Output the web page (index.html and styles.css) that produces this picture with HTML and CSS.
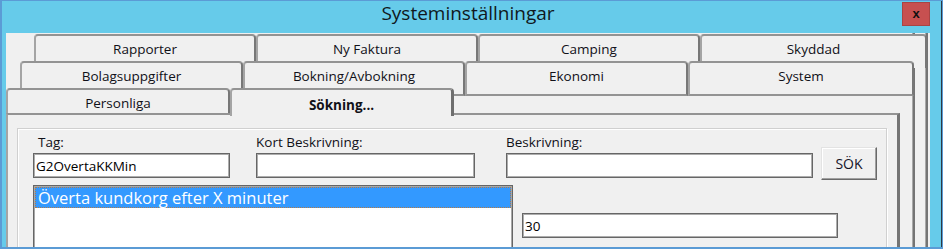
FILE: index.html
```html
<!DOCTYPE html>
<html lang="sv">
<head>
  <meta charset="UTF-8" />
  <title>Systeminställningar</title>
  <link rel="stylesheet" href="styles.css">
</head>
<body>
  <div class="window">
    <div class="titlebar">
      <div class="title">Systeminställningar</div>
      <button class="close-btn">x</button>
    </div>

    <div class="client">
      <div class="tabctl">
        <!-- back row -->
        <div class="tab-row row-1">
          <div class="tab">Rapporter</div>
          <div class="tab">Ny Faktura</div>
          <div class="tab">Camping</div>
          <div class="tab tab-last">Skyddad</div>
        </div>
        <div class="tab-row row-2">
          <div class="tab tab-wide">Bolagsuppgifter</div>
          <div class="tab">Bokning/Avbokning</div>
          <div class="tab tab-wide">Ekonomi</div>
          <div class="tab tab-end">System</div>
        </div>
        <!-- front row -->
        <div class="tab-row row-3">
          <div class="tab tab-front">Personliga</div>
          <div class="tab tab-front active">Sökning...</div>
        </div>

        <div class="tab-page">
          <div class="group">
            <div class="search-row">
              <div class="field field-tag">
                <label for="f-tag">Tag:</label>
                <input type="text" id="f-tag" value="G2OvertaKKMin">
              </div>
              <div class="field field-short">
                <label for="f-short">Kort Beskrivning:</label>
                <input type="text" id="f-short">
              </div>
              <div class="field field-desc">
                <label for="f-desc">Beskrivning:</label>
                <input type="text" id="f-desc">
              </div>
              <button class="search-btn">SÖK</button>
            </div>

            <div class="result-row">
              <div class="listbox">
                <div class="list-item selected">Överta kundkorg efter X minuter</div>
              </div>
              <input type="text" class="value-input" value="30">
            </div>
          </div>
        </div>
      </div>
    </div>
  </div>
</body>
</html>
```

FILE: styles.css
```css
* {
  margin: 0;
  padding: 0;
  box-sizing: border-box;
}

body {
  font-family: 'Open Sans', 'Noto Sans', sans-serif;
  font-size: 13.5px;
  color: #111118;
  background: #66cbea;
  overflow: hidden;
}

.window {
  width: 943px;
  height: 249px;
  display: flex;
  flex-direction: column;
  background: #66cbea;
  border-top: 1px solid #5b9bd5;
  border-left: 2px solid #5b9bd5;
  border-right: 1px solid #5b9bd5;
  border-bottom: 2px solid #5b9bd5;
  box-shadow: inset -1px 0 0 #2f3a44;
  padding: 0 12px 0 4px;
}

.titlebar {
  height: 32px;
  display: flex;
  flex: none;
}

.title {
  flex: 1;
  text-align: center;
  font-size: 19px;
  line-height: 24px;
  color: #101820;
  padding-left: 28px;
}

.close-btn {
  width: 28px;
  height: 24px;
  margin-top: 1px;
  background: #c75050;
  border: 1px solid #a94444;
  font-family: 'Liberation Sans', sans-serif;
  font-weight: bold;
  font-size: 13px;
  line-height: 18px;
  color: #111;
}

.client {
  flex: 1;
  background: #f0f0f0;
  overflow: hidden;
}

/* tab control */
.tabctl {
  height: 100%;
  padding-top: 1px;
  background:
    linear-gradient(to right,
      transparent 906px, #a8a8a8 906px, #a8a8a8 907px, #747474 907px, #747474 909px, transparent 909px,
      transparent 919px, #a8a8a8 919px, #a8a8a8 920px, #747474 920px, #747474 922px, transparent 922px),
    #f0f0f0;
}

.tab-row {
  display: flex;
  height: 27px;
}

.row-1 {
  padding-left: 28px;
}

.row-2 {
  padding-left: 14px;
}

.row-3 {
  height: 25px;
}

.tab {
  flex: none;
  width: 222px;
  height: 34px;
  background: #f0f0f0;
  border: solid #939393;
  border-width: 2px 2px 0 2px;
  border-left-color: #a4a4a4;
  border-right-color: #777;
  border-radius: 4px 4px 0 0;
  padding-top: 4px;
  line-height: 18px;
  text-align: center;
  white-space: nowrap;
}

.tab-last {
  width: 227px;
}

.row-2 .tab {
  height: 35px;
  border-bottom: 2px solid #939393;
}

.tab-wide {
  width: 223px;
}

.tab-end {
  width: 226px;
}

.row-3 .tab {
  width: 224px;
  height: 25px;
  border-bottom: none;
}

.row-3 .tab.active {
  position: relative;
  z-index: 1;
  height: 28px;
  padding-top: 6px;
  font-weight: bold;
  border-right-width: 3px;
  border-right-color: #6e6e6e;
}

.tab-page {
  width: 894px;
  height: 200px;
  border-top: 2px solid #939393;
  border-left: 2px solid #a4a4a4;
  border-right: 3px solid #747474;
  padding: 13px 10px 0 9px;
}

/* group box */
.group {
  height: 140px;
  border: 1px solid #d0d0d0;
  box-shadow: inset 1px 1px 0 #fff, 1px 1px 0 #fff;
  padding: 5px 0 0 15px;
}

.search-row {
  display: flex;
  align-items: flex-end;
}

.field {
  display: flex;
  flex-direction: column;
}

.field label {
  line-height: 16px;
  margin-bottom: 3px;
  white-space: nowrap;
}

.field-tag {
  width: 197px;
}

.field-tag label {
  padding-left: 5px;
}

.field-short {
  width: 219px;
  margin-left: 26px;
}

.field-desc {
  width: 307px;
  margin-left: 31px;
}

input[type="text"] {
  height: 25px;
  width: 100%;
  border: 1px solid #666;
  box-shadow: inset 0 0 0 1px #adadad;
  background: #fff;
  padding: 0 2px;
  font-family: inherit;
  font-size: 13.5px;
  color: #000;
  outline: none;
}

.search-btn {
  width: 56px;
  height: 33px;
  margin-left: 8px;
  margin-bottom: -2px;
  background: #f0f0f0;
  border: 1px solid;
  border-color: #e3e3e3 #696969 #696969 #e3e3e3;
  box-shadow: inset -1px -1px 0 #a0a0a0, inset 1px 1px 0 #fff;
  font-family: inherit;
  font-size: 14px;
  color: #141428;
}

.result-row {
  display: flex;
  align-items: flex-start;
  margin-top: 7px;
}

.listbox {
  width: 480px;
  height: 90px;
  background: #fff;
  border: 1px solid #666;
  box-shadow: inset 0 0 0 1px #a8a8a8;
  padding: 1px;
}

.list-item {
  height: 21px;
  line-height: 19px;
  padding-left: 2px;
  font-size: 16.5px;
  border: 1px dotted transparent;
  white-space: nowrap;
}

.list-item.selected {
  background: #3399ff;
  color: #fff;
  border-color: #b27a48;
}

.result-row .value-input {
  width: 316px;
  margin-left: 9px;
  margin-top: 28px;
}
```
